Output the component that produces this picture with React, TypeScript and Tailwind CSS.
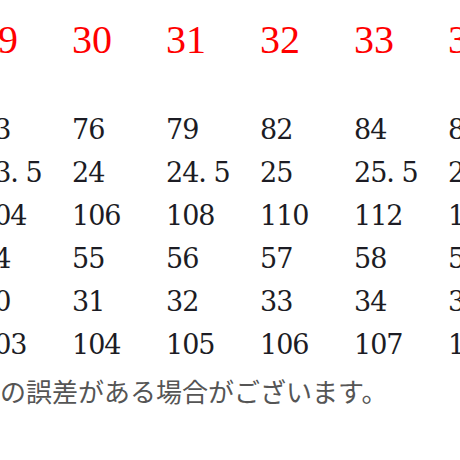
const header = ["29", "30", "31", "32", "33", "34"];

const rows = [
  ["73", "76", "79", "82", "84", "87"],
  ["23. 5", "24", "24. 5", "25", "25. 5", "26"],
  ["104", "106", "108", "110", "112", "114"],
  ["54", "55", "56", "57", "58", "59"],
  ["30", "31", "32", "33", "34", "35"],
  ["103", "104", "105", "106", "107", "108"],
];

export default function App() {
  return (
    <div className="w-[460px] h-[460px] overflow-hidden bg-white">
      <div className="ml-[-22px] w-[600px]">
        {/* size header */}
        <div className="mt-[18px] flex h-[43px] items-center">
          {header.map((h) => (
            <div
              key={h}
              className="w-[94px] shrink-0 whitespace-nowrap [font-family:'Liberation_Serif',serif] text-[40px] leading-[43px] text-[#ff0000]"
            >
              {h}
            </div>
          ))}
        </div>

        <div className="mt-[47px]">
          {rows.map((row, i) => (
            <div key={i} className="flex h-[43px] items-center">
              {row.map((v, j) => (
                <div
                  key={j}
                  className="w-[94px] shrink-0 whitespace-nowrap [font-family:'DejaVu_Serif',serif] text-[27px] leading-[43px] tracking-[-1px] text-[#1c1c24]"
                >
                  {v}
                </div>
              ))}
            </div>
          ))}
        </div>
      </div>

      <p className="mt-[12px] whitespace-nowrap [font-family:'Noto_Sans_CJK_JP',sans-serif] text-[26px] leading-[25px] text-[#555555]">
        の誤差がある場合がございます。
      </p>
    </div>
  );
}
